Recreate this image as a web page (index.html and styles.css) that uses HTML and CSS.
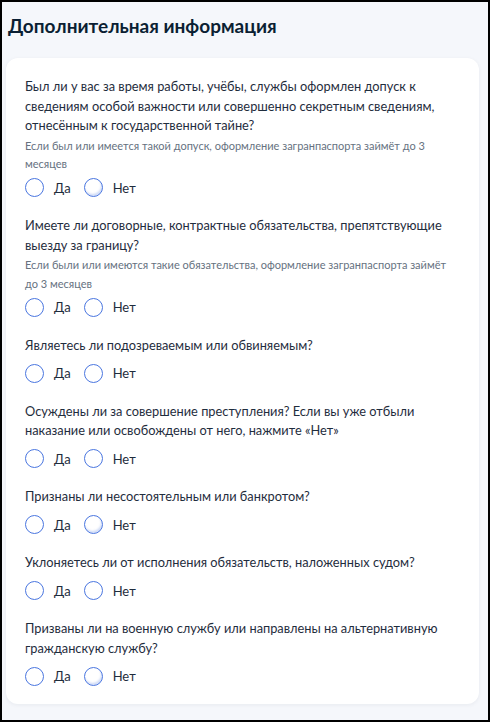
FILE: index.html
```html
<!DOCTYPE html>
<html lang="ru">
<head>
<meta charset="utf-8">
<link rel="stylesheet" href="styles.css">
</head>
<body>
<div class="frame">
  <h1 class="title">Дополнительная информация</h1>
  <div class="card">
    <div class="question">
      <p class="q-text">Был ли у вас за время работы, учёбы, службы оформлен допуск к сведениям особой важности или совершенно секретным сведениям, отнесённым к государственной тайне?</p>
      <p class="q-hint">Если был или имеется такой допуск, оформление загранпаспорта займёт до 3 месяцев</p>
      <div class="options">
        <label class="option"><span class="radio"></span><span class="opt-label">Да</span></label>
        <label class="option"><span class="radio hover"></span><span class="opt-label">Нет</span></label>
      </div>
    </div>
    <div class="question">
      <p class="q-text">Имеете ли договорные, контрактные обязательства, препятствующие выезду за границу?</p>
      <p class="q-hint">Если были или имеются такие обязательства, оформление загранпаспорта займёт до 3 месяцев</p>
      <div class="options">
        <label class="option"><span class="radio"></span><span class="opt-label">Да</span></label>
        <label class="option"><span class="radio"></span><span class="opt-label">Нет</span></label>
      </div>
    </div>
    <div class="question">
      <p class="q-text">Являетесь ли подозреваемым или обвиняемым?</p>
      <div class="options">
        <label class="option"><span class="radio"></span><span class="opt-label">Да</span></label>
        <label class="option"><span class="radio"></span><span class="opt-label">Нет</span></label>
      </div>
    </div>
    <div class="question">
      <p class="q-text">Осуждены ли за совершение преступления? Если вы уже отбыли наказание или освобождены от него, нажмите «Нет»</p>
      <div class="options">
        <label class="option"><span class="radio"></span><span class="opt-label">Да</span></label>
        <label class="option"><span class="radio"></span><span class="opt-label">Нет</span></label>
      </div>
    </div>
    <div class="question">
      <p class="q-text">Признаны ли несостоятельным или банкротом?</p>
      <div class="options">
        <label class="option"><span class="radio"></span><span class="opt-label">Да</span></label>
        <label class="option"><span class="radio hover"></span><span class="opt-label">Нет</span></label>
      </div>
    </div>
    <div class="question">
      <p class="q-text">Уклоняетесь ли от исполнения обязательств, наложенных судом?</p>
      <div class="options">
        <label class="option"><span class="radio"></span><span class="opt-label">Да</span></label>
        <label class="option"><span class="radio"></span><span class="opt-label">Нет</span></label>
      </div>
    </div>
    <div class="question">
      <p class="q-text">Призваны ли на военную службу или направлены на альтернативную гражданскую службу?</p>
      <div class="options">
        <label class="option"><span class="radio"></span><span class="opt-label">Да</span></label>
        <label class="option"><span class="radio hover"></span><span class="opt-label">Нет</span></label>
      </div>
    </div>
  </div>
</div>
</body>
</html>
```
FILE: styles.css
```css
html, body {
  margin: 0;
  padding: 0;
  height: 100%;
}
body {
  font-family: Lato, "Noto Sans", sans-serif;
  color: #0b1f33;
}
.frame {
  box-sizing: border-box;
  height: 722px;
  width: 490px;
  border: 2px solid #000;
  background: #f5f7fb;
  padding: 0 9px 0 4px;
}
.title {
  margin: 0;
  padding: 12px 0 0 2px;
  font-size: 19px;
  line-height: 24px;
  font-weight: 700;
  color: #0b1f33;
}
.card {
  margin-top: 20px;
  background: #fff;
  border-radius: 12px;
  padding: 19px 19px 18px;
  box-shadow: 0 1px 4px rgba(11, 31, 51, 0.06);
}
.question + .question {
  margin-top: 18.5px;
}
.q-text {
  margin: 0;
  font-size: 12.8px;
  line-height: 19.5px;
  color: #1f2d3d;
}
.q-hint {
  margin: 1px 0 0;
  font-size: 11px;
  line-height: 18.5px;
  color: #66727f;
}
.options {
  display: flex;
  gap: 13px;
  margin-top: 8px;
}
.q-hint + .options {
  margin-top: 4px;
}
.option {
  display: flex;
  align-items: center;
  gap: 10px;
  font-size: 13px;
  line-height: 20px;
  color: #1f2d3d;
}
.radio {
  box-sizing: border-box;
  width: 19px;
  height: 19px;
  border: 1.5px solid #4a76e0;
  border-radius: 50%;
  background: #fff;
}
.radio.hover {
  box-shadow: inset -1px -2px 2px rgba(74, 118, 224, 0.25);
}
```
